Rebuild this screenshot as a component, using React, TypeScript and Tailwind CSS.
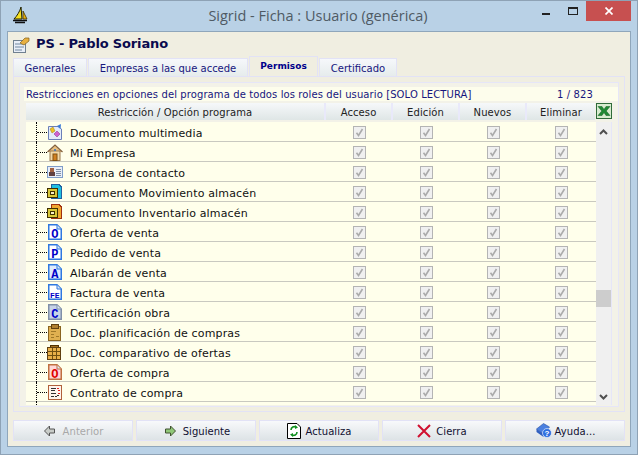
import React from "react";

const F = "font-['DejaVu_Sans','Verdana',sans-serif]";

const DocLetter = ({ l, stroke = "#2f78e0", fill = "#fff", color = "#0000c8", size = 12 }: { l: string; stroke?: string; fill?: string; color?: string; size?: number }) => (
  <svg width="14" height="16" viewBox="0 0 14 16" className="ml-px">
    <path d="M.75 .75H9L13.25 5V15.25H.75Z" fill={fill} stroke={stroke} strokeWidth="1.5" />
    <path d="M9 1V5H13" fill="#dce8f8" stroke={stroke} />
    <text x="6.8" y="13.5" textAnchor="middle" fontFamily="'Liberation Mono',monospace" fontWeight="700" fontSize={size} fill={color}>
      {l}
    </text>
  </svg>
);

const MultimediaIcon = () => (
  <svg width="16" height="16" viewBox="0 0 16 16">
    <path d="M1.5 2.5H11L14.5 5V15.5H1.5Z" fill="#e4ecfa" stroke="#6a7fb8" />
    <path d="M10 2L14 0L13.5 5Z" fill="#3a7ad8" />
    <path d="M3 5L6 3L8 7L5 9Z" fill="#f0c020" stroke="#a08010" strokeWidth=".5" />
    <path d="M7 10L10 7L13 10L10 13Z" fill="#d060d0" stroke="#803080" strokeWidth=".5" />
  </svg>
);

const HomeIcon = () => (
  <svg width="16" height="17" viewBox="0 0 16 17">
    <path d="M.5 8L8 1L15.5 8" fill="#e8c080" stroke="#806040" strokeWidth="1.2" />
    <rect x="3" y="7" width="10" height="9.5" fill="#f2d9a8" stroke="#9a7a50" />
    <rect x="6" y="10" width="4" height="6.5" fill="#d08020" stroke="#805010" />
    <circle cx="8" cy="6" r="1" fill="#3070c0" />
  </svg>
);

const ContactIcon = () => (
  <svg width="16" height="12" viewBox="0 0 16 12" shapeRendering="crispEdges">
    <rect x=".5" y=".5" width="15" height="11" fill="#e8eef8" stroke="#7f9cc8" />
    <rect x="3" y="2" width="4" height="4" fill="#a06040" />
    <rect x="2" y="6" width="6" height="4" fill="#604040" />
    <path d="M9 3H14M9 5H14M9 7H14M9 9H14" stroke="#8090a8" />
  </svg>
);

const StoreDoc = ({ paper, edge }: { paper: string; edge: string }) => (
  <svg width="15" height="16" viewBox="0 0 15 16" shapeRendering="crispEdges">
    <path d="M4.5 .5H12L14.5 3V14.5H4.5Z" fill={paper} stroke={edge} />
    <rect x=".5" y="4.5" width="10" height="9" fill="#d8c838" stroke="#403000" />
    <rect x="3.5" y="7.5" width="4" height="3" fill="#f8f0c0" stroke="#403000" />
  </svg>
);

const ClipIcon = () => (
  <svg width="13" height="17" viewBox="0 0 13 17" shapeRendering="crispEdges" className="ml-px">
    <rect x=".5" y="2.5" width="12" height="14" fill="#e0b050" stroke="#8a6420" />
    <rect x="3" y="0" width="7" height="4" fill="#b08030" stroke="#604010" />
    <path d="M3 7H8M3 10H6M8 12H11M3 13H6" stroke="#a07828" />
  </svg>
);

const GridIcon = () => (
  <svg width="14" height="15" viewBox="0 0 14 15" shapeRendering="crispEdges">
    <rect x="3" y="0" width="8" height="3" fill="#a07020" stroke="#503000" />
    <rect x=".5" y="2.5" width="13" height="12" fill="#e8b048" stroke="#604010" />
    <path d="M1 6H13M1 10H13M5 3V14M9 3V14" stroke="#705010" />
  </svg>
);

const ContractIcon = () => (
  <svg width="14" height="15" viewBox="0 0 14 15" shapeRendering="crispEdges" className="ml-px">
    <rect x=".5" y=".5" width="13" height="14" fill="#fff4ec" stroke="#b0603a" />
    <path d="M3 3H8M3 5H7M3 8H8M3 11H6" stroke="#303030" />
    <path d="M9 3H11M10 5H12M10 8H12" stroke="#e02020" />
    <path d="M7 12L11 10" stroke="#303030" />
  </svg>
);

const rows: [string, React.ReactNode][] = [
  ["Documento multimedia", <MultimediaIcon />],
  ["Mi Empresa", <HomeIcon />],
  ["Persona de contacto", <ContactIcon />],
  ["Documento Movimiento almacén", <StoreDoc paper="#20c0e0" edge="#2060a0" />],
  ["Documento Inventario almacén", <StoreDoc paper="#f0a830" edge="#a03010" />],
  ["Oferta de venta", <DocLetter l="O" />],
  ["Pedido de venta", <DocLetter l="P" />],
  ["Albarán de venta", <DocLetter l="A" fill="#e0ecfc" />],
  ["Factura de venta", <DocLetter l="FE" size={8} />],
  ["Certificación obra", <DocLetter l="C" stroke="#8090a8" fill="#c8d4e8" />],
  ["Doc. planificación de compras", <ClipIcon />],
  ["Doc. comparativo de ofertas", <GridIcon />],
  ["Oferta de compra", <DocLetter l="O" stroke="#c07040" fill="#ffd8d8" color="#e00000" />],
  ["Contrato de compra", <ContractIcon />],
];

const Check = () => (
  <svg width="13" height="13" viewBox="0 0 13 13" className="block">
    <rect x=".5" y=".5" width="12" height="12" fill="#f0f0f0" stroke="#b4b4b4" />
    <path d="M3.5 6.8L5.5 9.5L9.5 3" fill="none" stroke="#ababab" strokeWidth="1.6" />
  </svg>
);

const tabCls = "h-[18px] flex items-center justify-center pt-[2px] border border-b-0 border-[#e2e2f6] bg-gradient-to-b from-[#f6f8fb] to-[#e6ecec] text-[#16167e] text-[10px]";

const Btn = ({ label, icon, gap, disabled }: { label: string; icon: React.ReactNode; gap: string; disabled?: boolean }) => (
  <div className={`h-[21px] flex items-center justify-center ${gap} border border-[#e2e2f6] bg-gradient-to-b from-[#f8f9fb] to-[#dde3e6] text-[10px] tracking-[0.05px] ${disabled ? "text-[#a8a8a8]" : "text-[#101030]"}`}>
    {icon}
    <span className="pt-[2px]">{label}</span>
  </div>
);

export default function App() {
  return (
    <div className={`w-[638px] h-[455px] border border-[#8ea2b5] bg-[#b9d1e6] flex flex-col overflow-hidden ${F}`}>
      {/* barra de titulo */}
      <div className="h-[30px] flex items-start pl-[11px] shrink-0">
        <svg width="16" height="18" viewBox="0 0 16 18" className="mt-[5px]">
          <path d="M9 1L10 13H2C5 10 8 5 9 1Z" fill="#f5e020" stroke="#202000" strokeWidth="1" />
          <path d="M11 5L15 13H11Z" fill="#e8b010" stroke="#403000" strokeWidth=".8" />
          <path d="M1 14.5H15M3 16.5H13" stroke="#101010" strokeWidth="1.5" />
        </svg>
        <div className="flex-1 text-center font-['Open_Sans',sans-serif] text-[14.5px] leading-[30px] text-[#4f5a64] pl-[66px]">
          Sigrid - Ficha : Usuario (genérica)
        </div>
        <div className="flex items-start">
          <div className="w-[8px] h-[2px] bg-[#222] mt-[12px] mr-[18px]"></div>
          <div className="w-[10px] h-[8px] border border-t-2 border-[#222] mt-[6px] mr-[8px]"></div>
          <div className="w-[45px] h-[20px] bg-[#c75050] flex items-center justify-center mr-[6px]">
            <svg width="8" height="8" viewBox="0 0 8 8">
              <path d="M.5 .5L7.5 7.5M7.5 .5L.5 7.5" stroke="#fff" strokeWidth="1.7" />
            </svg>
          </div>
        </div>
      </div>

      <div className="mx-[6px] h-[416px] border border-[#8fa6bb] bg-[#f0eee1] px-[5px] flex flex-col">
        {/* cabecera */}
        <div className="h-[24px] flex items-center gap-[6px] shrink-0">
          <svg width="17" height="16" viewBox="0 0 17 16" className="mt-[1px]">
            <rect x=".5" y="3.5" width="12" height="12" fill="#e8eef8" stroke="#708090" />
            <path d="M2 7H11M2 10H11M2 13H9" stroke="#7088a0" />
            <path d="M7 6L12 1L16 1L16 4L11 8Z" fill="#e8b040" stroke="#806020" strokeWidth=".7" />
          </svg>
          <span className="text-[13px] font-bold text-[#0a0a4e] tracking-[-0.15px]">PS - Pablo Soriano</span>
        </div>

        {/* pestañas */}
        <div className="h-[20px] flex items-end gap-px shrink-0">
          <div className={`${tabCls} w-[74px]`}>Generales</div>
          <div className={`${tabCls} w-[160px]`}>Empresas a las que accede</div>
          <div className="w-[69px] h-[20px] flex items-start justify-center pt-[3px] border border-b-0 border-[#e2e2f6] bg-[#f0eee1] text-[#00008b] text-[9px] font-bold">
            Permisos
          </div>
          <div className={`${tabCls} w-[78px]`}>Certificado</div>
        </div>

        <div className="h-[336px] border border-[#e2e2f6] p-[5px] shrink-0">
          <div className="h-[325px] border border-[#e6e6f8] bg-[#f3f2e8] pl-[4px] pt-[4px] flex flex-col">
            {/* aviso */}
            <div className="h-[14px] bg-[#fdfdec] flex items-center justify-between pl-[2px] pr-[25px] text-[10px] tracking-[0.1px] text-[#16167e] shrink-0">
              <span>Restricciones en opciones del programa de todos los roles del usuario [SOLO LECTURA]</span>
              <span>1 / 823</span>
            </div>

            {/* encabezado tabla */}
            <div className="ml-[2px] mt-[2px] flex items-start shrink-0">
              <div className="w-[569px] h-[17px] grid grid-cols-[300px_67px_67px_67px_68px] text-[10px] tracking-[0.1px] text-[#222]">
                {["Restricción / Opción programa", "Acceso", "Edición", "Nuevos", "Eliminar"].map((h) => (
                  <div key={h} className="flex items-center justify-center pt-[2px] border-r-2 border-[#e9e9fa] last:border-r-0 bg-gradient-to-b from-[#f6f8fa] to-[#dfe6e6]">
                    {h}
                  </div>
                ))}
              </div>
              <div className="w-[16px] h-[16px] ml-px border border-[#2f6b3a] bg-[#d8ecd0] flex items-center justify-center">
                <svg width="14" height="14" viewBox="0 0 14 14">
                  <path d="M1 2.5H5L7 5.5L9 2.5H13L9.2 7L13 11.5H9L7 8.5L5 11.5H1L4.8 7Z" fill="#1f8a34" stroke="#145a22" strokeWidth=".5" />
                </svg>
              </div>
            </div>

            {/* filas */}
            <div className="ml-[2px] mt-[2px] flex h-[283px] shrink-0">
              <div className="w-[570px] bg-[#ffffeb] flex flex-col">
                {rows.map(([name, icon]) => (
                  <div key={name} className="h-[20px] shrink-0 border-b border-[#c9c9c0] grid grid-cols-[300px_67px_67px_67px_69px] items-center">
                    <div className="flex items-center h-[20px]">
                      <div className="ml-[10px] w-[11px] h-[20px] border-l border-dotted border-black flex items-center">
                        <div className="w-full border-t border-dotted border-black"></div>
                      </div>
                      <div className="w-[18px] h-[18px] flex items-center justify-start shrink-0">{icon}</div>
                      <span className="ml-[5px] mt-[4px] text-[11px] tracking-[0.15px] text-[#111] whitespace-nowrap">{name}</span>
                    </div>
                    {[0, 1, 2, 3].map((c) => (
                      <div key={c} className="flex justify-center">
                        <Check />
                      </div>
                    ))}
                  </div>
                ))}
                <div className="h-[3px] ml-[10px] border-l border-dotted border-black"></div>
              </div>
              <div className="w-[16px] bg-[#f0f0f0] border-r border-[#e6e6f8] flex flex-col items-center justify-between pt-[7px] pb-[5px] relative">
                <svg width="9" height="6" viewBox="0 0 9 6">
                  <path d="M1 5L4.5 1.5L8 5" fill="none" stroke="#505050" strokeWidth="2" />
                </svg>
                <div className="absolute left-0 top-[168px] w-[15px] h-[17px] bg-[#cdcdcd]"></div>
                <svg width="9" height="6" viewBox="0 0 9 6">
                  <path d="M1 1L4.5 4.5L8 1" fill="none" stroke="#505050" strokeWidth="2" />
                </svg>
              </div>
            </div>
          </div>
        </div>

        {/* botones */}
        <div className="mt-[8px] grid grid-cols-5 gap-[3px] shrink-0">
          <Btn
            disabled
            gap="gap-[8px] pl-[1px]"
            label="Anterior"
            icon={
              <svg width="11" height="12" viewBox="0 0 11 12">
                <path d="M5.5 1L.5 6L5.5 11V8H10.5V4H5.5Z" fill="#c8ccc8" stroke="#555" />
              </svg>
            }
          />
          <Btn
            gap="gap-[7px] pl-[3px]"
            label="Siguiente"
            icon={
              <svg width="11" height="12" viewBox="0 0 11 12">
                <path d="M5.5 1L10.5 6L5.5 11V8H.5V4H5.5Z" fill="#90c878" stroke="#405030" />
              </svg>
            }
          />
          <Btn
            gap="gap-[5px]"
            label="Actualiza"
            icon={
              <svg width="14" height="16" viewBox="0 0 14 16">
                <path d="M.5 .5H10L13.5 4V15.5H.5Z" fill="#fff" stroke="#000" />
                <path d="M4 7C4 4 7 3 9 4M10 9C10 12 7 13 5 12" fill="none" stroke="#109020" strokeWidth="1.6" />
                <path d="M8 2L11 4.5L8 6ZM6 10L3 11.5L6 14Z" fill="#109020" />
              </svg>
            }
          />
          <Btn
            gap="gap-[5px]"
            label="Cierra"
            icon={
              <svg width="14" height="14" viewBox="0 0 14 14">
                <path d="M1 1L13 13M13 1L1 13" stroke="#d01030" strokeWidth="2" />
              </svg>
            }
          />
          <Btn
            gap="gap-[3px]"
            label="Ayuda..."
            icon={
              <svg width="17" height="15" viewBox="0 0 16 15">
                <path d="M1 6L8 .5L14 4L8 11Z" fill="#4a7fe0" stroke="#2a50a0" strokeWidth=".6" />
                <path d="M1 6L8 11V14L1 9Z" fill="#2f5fc0" />
                <circle cx="11.5" cy="10" r="4.5" fill="#3070e0" stroke="#fff" strokeWidth=".6" />
                <text x="11.5" y="13" textAnchor="middle" fontSize="8" fontWeight="700" fill="#fff" fontFamily="'Liberation Sans',sans-serif">?</text>
              </svg>
            }
          />
        </div>
      </div>
    </div>
  );
}
